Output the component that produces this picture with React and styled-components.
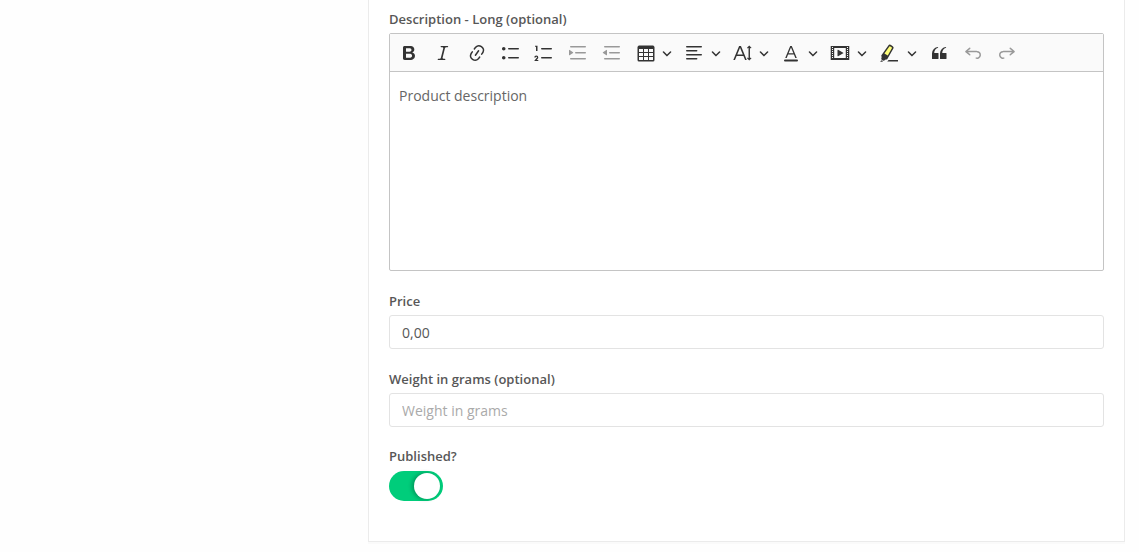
import React from 'react';
import styled, { createGlobalStyle } from 'styled-components';

const GlobalStyle = createGlobalStyle`
  *, *::before, *::after { box-sizing: border-box; }
  html, body { margin: 0; background: #fefefe; overflow: hidden; }
  body { font-family: 'Open Sans', sans-serif; font-size: 14px; color: #575757; }
`;

const Page = styled.main`
  height: 552px;
  padding: 0 14px 0 368px;
`;

const Card = styled.form`
  display: flex;
  flex-direction: column;
  height: 542px;
  padding: 9px 20px 0;
  background: #fff;
  border: 1px solid #ebebeb;
  border-top: 0;
  box-shadow: 0 2px 0 rgba(0, 0, 0, 0.015);
`;

const Field = styled.div`
  display: flex;
  flex-direction: column;
  margin-bottom: ${({ $gap }) => $gap || 0}px;
`;

const Label = styled.label`
  height: ${({ $height }) => $height || 24}px;
  font-size: 13px;
  line-height: 20px;
  font-weight: 600;
  letter-spacing: 0.01px;
`;

const Editor = styled.div`
  display: flex;
  flex-direction: column;
  height: 238px;
  border: 1px solid #c4c4c4;
  border-radius: 2px;
`;

const Toolbar = styled.div`
  display: flex;
  align-items: center;
  gap: 3.875px;
  height: 38px;
  padding: 0 3.90625px;
  background: #fafafa;
  border-bottom: 1px solid #c4c4c4;
`;

const ToolButton = styled.button`
  display: flex;
  align-items: center;
  flex: none;
  width: ${({ $menu, $split }) => ($split ? 47.15 : $menu ? 44.5625 : 30)}px;
  height: 30px;
  padding: 0 0 0 ${({ $split }) => ($split ? 5.6 : 5)}px;
  border: 0;
  background: transparent;
  color: #333;

  &:disabled { color: #999; }
`;

const Glyph = styled.svg`
  flex: none;
  width: 20px;
  height: 20px;
  fill: currentColor;
`;

const Caret = styled.svg`
  flex: none;
  width: 10px;
  height: 10px;
  margin-left: ${({ $gap }) => $gap}px;
  fill: currentColor;
`;

const Content = styled.div`
  padding: 14px 9px;
  font-size: 14px;
  line-height: 20px;
  color: #666;
`;

const Input = styled.input`
  width: 100%;
  height: 34px;
  padding: 1px 12px 0;
  border: 1px solid #e3e3e3;
  border-radius: 3px;
  background: #fff;
  font: 14px 'Open Sans', sans-serif;
  color: #575757;

  &::placeholder { color: #aaa; opacity: 1; }
`;

const Switch = styled.button`
  display: flex;
  justify-content: flex-end;
  width: 54px;
  height: 30px;
  padding: 2px 3px 2px 2px;
  border: 0;
  border-radius: 15px;
  background: #00cd7b;
`;

const Knob = styled.span`
  width: 26px;
  height: 26px;
  border-radius: 50%;
  background: #fff;
  box-shadow: -2px 0 4px rgba(0, 0, 0, 0.28);
`;

const tools = [
  { name: 'Bold', d: 'M10.187 17H5.773c-.637 0-1.092-.138-1.364-.415-.273-.277-.409-.718-.409-1.323V4.738c0-.617.14-1.062.419-1.332.279-.27.73-.406 1.354-.406h4.68c.69 0 1.288.041 1.793.124.506.083.96.242 1.36.477.341.197.644.447.906.75a3.262 3.262 0 0 1 .808 2.162c0 1.401-.722 2.426-2.167 3.075C15.05 10.175 16 11.315 16 13.01a3.756 3.756 0 0 1-2.296 3.504 6.1 6.1 0 0 1-1.517.377c-.571.073-1.238.11-2 .11zm-.217-6.217H7v4.087h3.069c1.977 0 2.965-.69 2.965-2.072 0-.707-.256-1.22-.768-1.537-.512-.319-1.277-.478-2.296-.478zM7 5.13v3.619h2.606c.729 0 1.292-.067 1.69-.2a1.6 1.6 0 0 0 .91-.765c.165-.267.247-.566.247-.897 0-.707-.26-1.176-.778-1.409-.519-.232-1.31-.348-2.375-.348H7z' },
  { name: 'Italic', d: 'M9.586 14.633l.021.004c-.036.335.095.655.393.962.082.083.173.15.274.201h1.474a.6.6 0 1 1 0 1.2H5.304a.6.6 0 0 1 0-1.2h1.15c.474-.07.809-.182 1.005-.334.157-.122.291-.32.404-.597l2.416-9.55a1.053 1.053 0 0 0-.281-.823 1.12 1.12 0 0 0-.442-.296H8.15a.6.6 0 0 1 0-1.2h6.443a.6.6 0 1 1 0 1.2h-1.195c-.376.056-.65.155-.823.296-.215.175-.423.439-.623.79l-2.366 9.347z' },
  { name: 'Link', d: 'M11.077 15l.991-1.416a.75.75 0 1 1 1.229.86l-1.148 1.64a.748.748 0 0 1-.217.206 5.251 5.251 0 0 1-8.503-5.955.741.741 0 0 1 .12-.274l1.147-1.639a.75.75 0 1 1 1.228.86L4.933 10.7l.006.003a3.75 3.75 0 0 0 6.132 4.294l.006.004zm5.494-5.335a.748.748 0 0 1-.12.274l-1.147 1.639a.75.75 0 1 1-1.228-.86l.86-1.23a3.75 3.75 0 0 0-6.144-4.301l-.86 1.229a.75.75 0 0 1-1.229-.86l1.148-1.64a.748.748 0 0 1 .217-.206 5.251 5.251 0 0 1 8.503 5.955zm-4.563-2.532a.75.75 0 0 1 .184 1.045l-3.155 4.505a.75.75 0 1 1-1.229-.86l3.155-4.506a.75.75 0 0 1 1.045-.184z' },
  { name: 'Bulleted list', d: 'M7 5.75c0 .414.336.75.75.75h9.5a.75.75 0 1 0 0-1.5h-9.5a.75.75 0 0 0-.75.75zm-6 0C1 4.784 1.777 4 2.75 4c.966 0 1.75.777 1.75 1.75 0 .966-.777 1.75-1.75 1.75C1.784 7.5 1 6.723 1 5.75zm6 9c0 .414.336.75.75.75h9.5a.75.75 0 1 0 0-1.5h-9.5a.75.75 0 0 0-.75.75zm-6 0c0-.966.777-1.75 1.75-1.75.966 0 1.75.777 1.75 1.75 0 .966-.777 1.75-1.75 1.75-.966 0-1.75-.777-1.75-1.75z' },
  { name: 'Numbered list', d: 'M7 5.75c0 .414.336.75.75.75h9.5a.75.75 0 1 0 0-1.5h-9.5a.75.75 0 0 0-.75.75zM3.5 3v5H2V3.7H1v-1h2.5V3zM.343 17.857l2.59-3.257H2.92a.6.6 0 1 0-1.04 0H.302a2 2 0 1 1 3.995 0h-.001c-.048.405-.16.734-.333.988-.175.254-.59.692-1.244 1.312H4.3v1h-4l.043-.043zM7 14.75a.75.75 0 0 1 .75-.75h9.5a.75.75 0 1 1 0 1.5h-9.5a.75.75 0 0 1-.75-.75z' },
  { name: 'Increase indent', disabled: true, d: 'M2 3.75c0 .414.336.75.75.75h14.5a.75.75 0 1 0 0-1.5H2.75a.75.75 0 0 0-.75.75zm5 6c0 .414.336.75.75.75h9.5a.75.75 0 1 0 0-1.5h-9.5a.75.75 0 0 0-.75.75zM2.75 16.5h14.5a.75.75 0 1 0 0-1.5H2.75a.75.75 0 1 0 0 1.5zM1.632 6.95L5.02 9.358a.4.4 0 0 1-.013.661l-3.39 2.207A.4.4 0 0 1 1 11.892V7.275a.4.4 0 0 1 .632-.326z' },
  { name: 'Decrease indent', disabled: true, d: 'M2 3.75c0 .414.336.75.75.75h14.5a.75.75 0 1 0 0-1.5H2.75a.75.75 0 0 0-.75.75zm5 6c0 .414.336.75.75.75h9.5a.75.75 0 1 0 0-1.5h-9.5a.75.75 0 0 0-.75.75zM2.75 16.5h14.5a.75.75 0 1 0 0-1.5H2.75a.75.75 0 1 0 0 1.5zM4.368 6.95L.98 9.358a.4.4 0 0 0 .013.661l3.39 2.207A.4.4 0 0 0 5 11.892V7.275a.4.4 0 0 0-.632-.326z' },
  { name: 'Insert table', menu: true, d: 'M3 6v3h4V6H3zm0 4v3h4v-3H3zm0 4v3h4v-3H3zm5 3h4v-3H8v3zm5 0h4v-3h-4v3zm4-4v-3h-4v3h4zm0-4V6h-4v3h4zm1.5 8a1.5 1.5 0 0 1-1.5 1.5H3A1.5 1.5 0 0 1 1.5 17V4c.222-.863 1.068-1.5 2-1.5h13c.932 0 1.778.637 2 1.5v13zM12 13v-3H8v3h4zm0-4V6H8v3h4z' },
  { name: 'Text alignment', menu: true, d: 'M2 3.75c0 .414.336.75.75.75h14.5a.75.75 0 1 0 0-1.5H2.75a.75.75 0 0 0-.75.75zm0 8c0 .414.336.75.75.75h14.5a.75.75 0 1 0 0-1.5H2.75a.75.75 0 0 0-.75.75zm0 4c0 .414.336.75.75.75h9.929a.75.75 0 1 0 0-1.5H2.75a.75.75 0 0 0-.75.75zm0-8c0 .414.336.75.75.75h9.929a.75.75 0 1 0 0-1.5H2.75a.75.75 0 0 0-.75.75z' },
  { name: 'Font size', menu: true, d: 'M9.816 11.5L7.038 4.785 4.261 11.5h5.555zm.62 1.5H3.641l-1.666 4.028H.312l5.789-14h1.875l5.789 14h-1.663L10.436 13zM16.25 2.6l2.25 2.25-.75.75-.8-.75v10.3l.8-.75.75.75-2.25 2.25L14 15.15l.75-.75.8.75V4.85l-.8.75-.75-.75z' },
  { name: 'Font color', menu: true, d: 'M12.4 10.3L10 4.5l-2.4 5.8h4.8zm.5 1.2H7.1L5.7 15H4.2l5-12h1.6l5 12h-1.5l-1.4-3.5zm3.1 7H4a1 1 0 0 1 0-2h12a1 1 0 0 1 0 2z' },
  { name: 'Insert media', menu: true, caretGap: 7, d: 'M18.68 3.03c.6 0 .59-.03.59.55v12.84c0 .59.01.56-.59.56H1.29c-.6 0-.59.03-.59-.56V3.58c0-.58-.01-.55.6-.55h17.38zM15.77 15V5H4.2v10h11.57zM2 4v1h1V4H2zm0 2v1h1V6H2zm0 2v1h1V8H2zm0 2v1h1v-1H2zm0 2v1h1v-1H2zm0 2v1h1v-1H2zM17 4v1h1V4h-1zm0 2v1h1V6h-1zm0 2v1h1V8h-1zm0 2v1h1v-1h-1zm0 2v1h1v-1h-1zm0 2v1h1v-1h-1zM7.5 7.177a.4.4 0 0 1 .593-.351l5.133 2.824a.4.4 0 0 1 0 .7l-5.133 2.824a.4.4 0 0 1-.593-.35V7.176v.001z' },
  { name: 'Highlight', menu: true, split: true, caretGap: 8.2, fill: 'M10.798 1.59L3.002 12.875l1.895 1.852 2.521 1.402 6.997-12.194z', d: 'M2.556 16.727l.234-.348c-.297-.151-.462-.293-.498-.426-.036-.137.002-.416.115-.837.094-.25.15-.449.169-.595a4.495 4.495 0 0 0 0-.725c-.209-.621-.303-1.041-.284-1.26.02-.218.178-.506.475-.862l6.77-9.414c.539-.91 1.605-.85 3.199.18 1.594 1.032 2.188 1.928 1.784 2.686l-5.877 10.36c-.158.412-.333.673-.526.782-.193.108-.604.179-1.232.21-.362.131-.608.237-.738.318-.13.081-.305.238-.526.47-.293.265-.504.397-.632.397-.096 0-.27-.075-.524-.226l-.31.41-1.6-1.12zm-.279.415l1.575 1.103-.392.515H1.19l1.087-1.618zm8.1-13.656l-4.953 6.9L8.75 12.57l4.247-7.574c.175-.25-.188-.647-1.092-1.192-.903-.546-1.412-.652-1.528-.32zM8.244 18.5L9.59 17h9.406v1.5H8.245z' },
  { name: 'Block quote', d: 'M3 10.423a6.5 6.5 0 0 1 6.056-6.408l.038.67C6.448 5.423 5.354 7.663 5.22 10H9c.552 0 .5.432.5.986v4.511c0 .554-.448.503-1 .503h-5c-.552 0-.5-.449-.5-1.003v-4.574zm8 0a6.5 6.5 0 0 1 6.056-6.408l.038.67c-2.646.739-3.74 2.979-3.873 5.315H17c.552 0 .5.432.5.986v4.511c0 .554-.448.503-1 .503h-5c-.552 0-.5-.449-.5-1.003v-4.574z' },
  { name: 'Undo', disabled: true, d: 'M5.042 9.367l2.189 1.837a.75.75 0 0 1-.965 1.149l-3.788-3.18a.747.747 0 0 1-.21-.284.75.75 0 0 1 .17-.945L6.23 4.762a.75.75 0 1 1 .964 1.15L4.863 7.866h8.917A.75.75 0 0 1 14 7.9a4 4 0 1 1-1.477 7.718l.344-1.489a2.5 2.5 0 1 0 1.094-4.73l.008-.032H5.042z' },
  { name: 'Redo', disabled: true, d: 'M14.958 9.367l-2.189 1.837a.75.75 0 0 0 .965 1.149l3.788-3.18a.747.747 0 0 0 .21-.284.75.75 0 0 0-.17-.945L13.77 4.762a.75.75 0 1 0-.964 1.15l2.331 1.955H6.22A.75.75 0 0 0 6 7.9a4 4 0 1 0 1.477 7.718l-.344-1.489A2.5 2.5 0 1 1 6.039 9.4l-.008-.032h8.927z' },
];

function Tool({ name, d, fill, menu, split, caretGap = 6.3, disabled }) {
  return (
    <ToolButton type="button" aria-label={name} $menu={menu} $split={split} disabled={disabled}>
      <Glyph viewBox="0 0 20 20">
        {fill && <path d={fill} fill="#fdfd77" />}
        <path d={d} />
      </Glyph>
      {menu && (
        <Caret viewBox="0 0 10 10" $gap={caretGap}>
          <path d="M.941 4.523a.75.75 0 1 1 1.06-1.06l3.006 3.005 3.005-3.005a.75.75 0 1 1 1.06 1.06l-3.549 3.55a.75.75 0 0 1-1.168-.136L.941 4.523z" />
        </Caret>
      )}
    </ToolButton>
  );
}

export default function App() {
  return (
    <>
      <GlobalStyle />
      <Page>
        <Card>
          <Field $gap={20}>
            <Label>Description - Long (optional)</Label>
            <Editor>
              <Toolbar>
                {tools.map((tool) => <Tool key={tool.name} {...tool} />)}
              </Toolbar>
              <Content>Product description</Content>
            </Editor>
          </Field>
          <Field $gap={20}>
            <Label htmlFor="price">Price</Label>
            <Input id="price" defaultValue="0,00" />
          </Field>
          <Field $gap={19}>
            <Label htmlFor="weight">Weight in grams (optional)</Label>
            <Input id="weight" placeholder="Weight in grams" />
          </Field>
          <Field>
            <Label $height={25}>Published?</Label>
            <Switch type="button" role="switch" aria-checked="true" aria-label="Published?">
              <Knob />
            </Switch>
          </Field>
        </Card>
      </Page>
    </>
  );
}
